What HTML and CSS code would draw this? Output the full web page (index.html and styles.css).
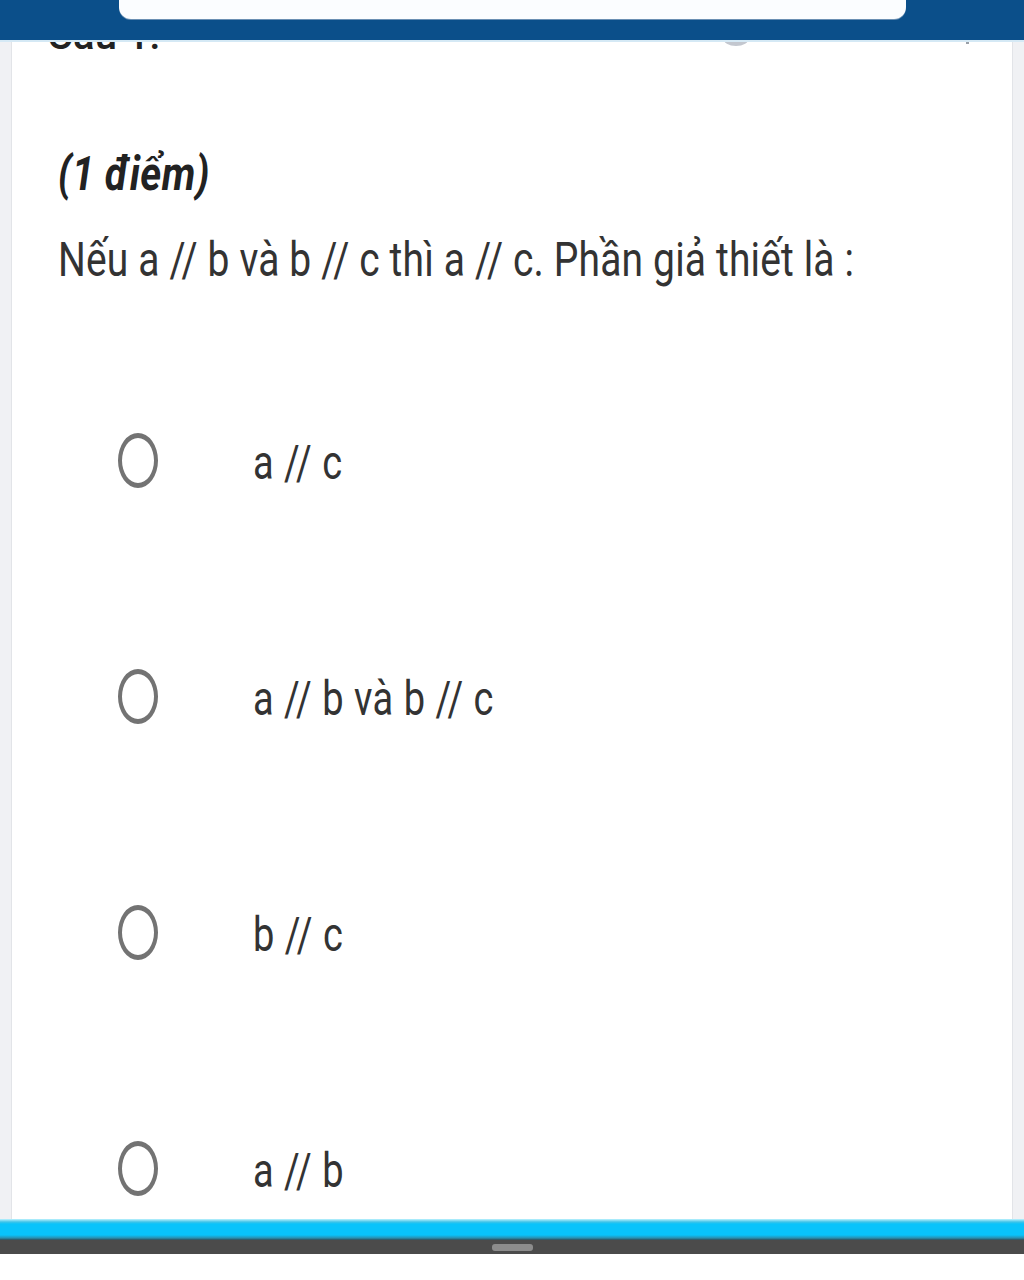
FILE: index.html
```html
<!DOCTYPE html>
<html lang="vi">
<head>
<meta charset="utf-8">
<title>Câu 1</title>
<link rel="stylesheet" href="styles.css">
</head>
<body>
<div class="card">
  <div class="qhead">
    <span class="qnum">Câu 1:</span>
    <span class="dot"></span>
    <span class="tick"></span>
  </div>
  <div class="title"><span class="stretch t-stretch">(1 điểm)</span></div>
  <div class="question"><span class="stretch q-stretch">Nếu a // b và b // c thì a // c. Phần giả thiết là :</span></div>
  <div class="options">
    <label class="option"><span class="radio"></span><span class="stretch opt-text">a // c</span></label>
    <label class="option"><span class="radio"></span><span class="stretch opt-text">a // b và b // c</span></label>
    <label class="option"><span class="radio"></span><span class="stretch opt-text">b // c</span></label>
    <label class="option"><span class="radio"></span><span class="stretch opt-text">a // b</span></label>
  </div>
</div>
<div class="topbar"><div class="search"></div></div>
<div class="bottombar">
  <div class="cyan"></div>
  <div class="nav"><span class="pill"></span></div>
  <div class="white"></div>
</div>
</body>
</html>
```
FILE: styles.css
```css
html, body {
  margin: 0;
  padding: 0;
}
body {
  background: #f0f1f4;
  font-family: Roboto, "Noto Sans", "Liberation Sans", sans-serif;
  color: #2f2f2f;
  width: 1024px;
  height: 1280px;
  overflow: hidden;
  position: relative;
}
.card {
  margin: 0 11px 0 11px;
  height: 1280px;
  background: #ffffff;
  border-left: 1px solid #e2e4e8;
  border-right: 1px solid #e2e4e8;
  padding-left: 46px;
  box-sizing: border-box;
  overflow: hidden;
}
.qhead {
  height: 60px;
  display: flex;
  align-items: flex-end;
  position: relative;
}
.qnum {
  font-size: 40px;
  font-weight: 500;
  line-height: 40px;
  margin-bottom: 4px;
  margin-left: -11px;
  color: #222;
}
.dot {
  position: absolute;
  left: 665px;
  top: 30px;
  width: 26px;
  height: 16px;
  border-radius: 50%;
  background: #c3c7cf;
}
.tick {
  position: absolute;
  left: 908px;
  top: 36px;
  width: 3px;
  height: 8px;
  background: #9aa0a8;
}
.stretch {
  display: inline-block;
  transform: scaleY(1.25);
  transform-origin: center;
  white-space: nowrap;
}
.t-stretch {
  transform: scaleY(1.18);
}
.q-stretch {
  transform: scaleY(1.22);
}
.title {
  margin-top: 85px;
  height: 60px;
  line-height: 60px;
  font-size: 40px;
  font-weight: 700;
  font-style: italic;
  color: #222;
  letter-spacing: 0.4px;
}
.question {
  margin-top: 25px;
  height: 60px;
  line-height: 60px;
  font-size: 39px;
  color: #333;
  letter-spacing: 0.15px;
}
.options {
  margin-top: 52px;
  display: flex;
  flex-direction: column;
}
.option {
  height: 236px;
  display: flex;
  align-items: center;
  padding-left: 60px;
}
.radio {
  width: 40px;
  height: 55px;
  box-sizing: border-box;
  border-style: solid;
  border-color: #737373;
  border-width: 5px 4px;
  border-radius: 50%;
  flex: none;
}
.opt-text {
  margin-left: 95px;
  margin-top: 6px;
  font-size: 38px;
  color: #333;
  letter-spacing: 0.5px;
}
.topbar {
  position: absolute;
  top: 0;
  left: 0;
  width: 1024px;
  height: 40px;
  background: #0b4f8a;
  border-bottom: 2px solid #d5e9f5;
}
.search {
  margin: 0 118px 0 119px;
  height: 19px;
  background: #fbfdff;
  border-radius: 0 0 12px 12px;
  box-shadow: 0 1px 0 #6a8fb3;
}
.bottombar {
  position: absolute;
  top: 1219px;
  left: 0;
  width: 1024px;
  display: flex;
  flex-direction: column;
}
.cyan {
  height: 21px;
  background: linear-gradient(#bdf3ff 0, #3fc3e8 3px, #09c3fb 5px, #09c3fb 16px, #2a8fb0 19px, #2c4f5b 21px);
}
.nav {
  height: 14px;
  background: #4b4b4b;
  display: flex;
  justify-content: center;
  align-items: center;
}
.pill {
  width: 41px;
  height: 7px;
  border-radius: 3px;
  background: #8c8c8c;
}
.white {
  height: 26px;
  background: #ffffff;
}
```
